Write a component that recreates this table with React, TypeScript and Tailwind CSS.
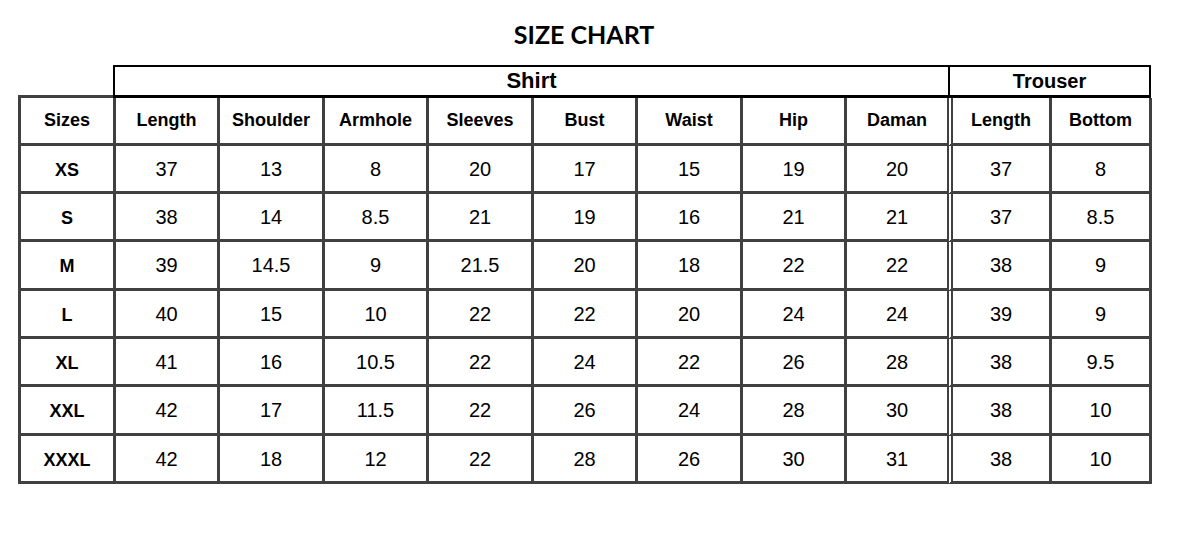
const shirtCols = [
  { label: 'Length', w: 'w-[104px]' },
  { label: 'Shoulder', w: 'w-[105px]' },
  { label: 'Armhole', w: 'w-[104px]' },
  { label: 'Sleeves', w: 'w-[105px]' },
  { label: 'Bust', w: 'w-[104px]' },
  { label: 'Waist', w: 'w-[105px]' },
  { label: 'Hip', w: 'w-[104px]' },
]

const rows: { size: string; h: string; values: string[] }[] = [
  { size: 'XS', h: 'h-[48px]', values: ['37', '13', '8', '20', '17', '15', '19', '20', '37', '8'] },
  { size: 'S', h: 'h-[48px]', values: ['38', '14', '8.5', '21', '19', '16', '21', '21', '37', '8.5'] },
  { size: 'M', h: 'h-[49px]', values: ['39', '14.5', '9', '21.5', '20', '18', '22', '22', '38', '9'] },
  { size: 'L', h: 'h-[48px]', values: ['40', '15', '10', '22', '22', '20', '24', '24', '39', '9'] },
  { size: 'XL', h: 'h-[48px]', values: ['41', '16', '10.5', '22', '24', '22', '26', '28', '38', '9.5'] },
  { size: 'XXL', h: 'h-[49px]', values: ['42', '17', '11.5', '22', '26', '24', '28', '30', '38', '10'] },
  { size: 'XXXL', h: 'h-[48px]', values: ['42', '18', '12', '22', '28', '26', '30', '31', '38', '10'] },
]

const cell = 'flex items-center justify-center border-[#404040] shrink-0'

function Row({ size, values, h, head }: { size: string; values: string[]; h: string; head?: boolean }) {
  const txt = head ? 'text-[18px] font-bold' : 'text-[20px]'
  return (
    <div className={`flex ${h}`}>
      <div
        className={`${cell} w-[98px] border-l-[3px] border-r-[3px] border-b-[3px] text-[18px] font-bold ${head ? '' : 'pt-[3px]'}`}
      >
        {size}
      </div>
      {shirtCols.map((c, i) => (
        <div key={i} className={`${cell} ${c.w} border-r-[3px] border-b-[3px] ${txt}`}>
          {values[i]}
        </div>
      ))}
      <div className={`${cell} w-[100px] border-b-[3px] ${txt}`}>{values[7]}</div>
      <div className={`${cell} w-[105px] border-l-[6px] [border-left-style:double] border-r-[3px] border-b-[3px] ${txt}`}>
        {values[8]}
      </div>
      <div className={`${cell} w-[100px] border-r-[3px] border-b-[3px] ${txt}`}>{values[9]}</div>
    </div>
  )
}

export default function App() {
  return (
    <div className="w-[1188px] h-[540px] bg-white text-black font-['Liberation_Sans',Arial,sans-serif]">
      <div className="h-[65px] flex items-center justify-center pt-[4px] pr-[20px]">
        <h1 className="font-['Lato',sans-serif] font-bold text-[25px]">SIZE CHART</h1>
      </div>
      <div className="pl-[18px]">
        <div className="flex h-[33px]">
          <div className="w-[95px] border-b-[3px] border-[#404040]" />
          <div className="w-[837px] border-[#000] border-l-2 border-r-2 border-t-2 border-b-[3px] flex items-center justify-center text-[22px] font-bold leading-none">
            Shirt
          </div>
          <div className="w-[201px] border-[#000] border-r-2 border-t-2 border-b-[3px] flex items-center justify-center text-[20px] font-bold leading-none">
            Trouser
          </div>
        </div>
        <Row
          head
          h="h-[48px]"
          size="Sizes"
          values={[...shirtCols.map((c) => c.label), 'Daman', 'Length', 'Bottom']}
        />
        {rows.map((r) => (
          <Row key={r.size} size={r.size} values={r.values} h={r.h} />
        ))}
      </div>
    </div>
  )
}
